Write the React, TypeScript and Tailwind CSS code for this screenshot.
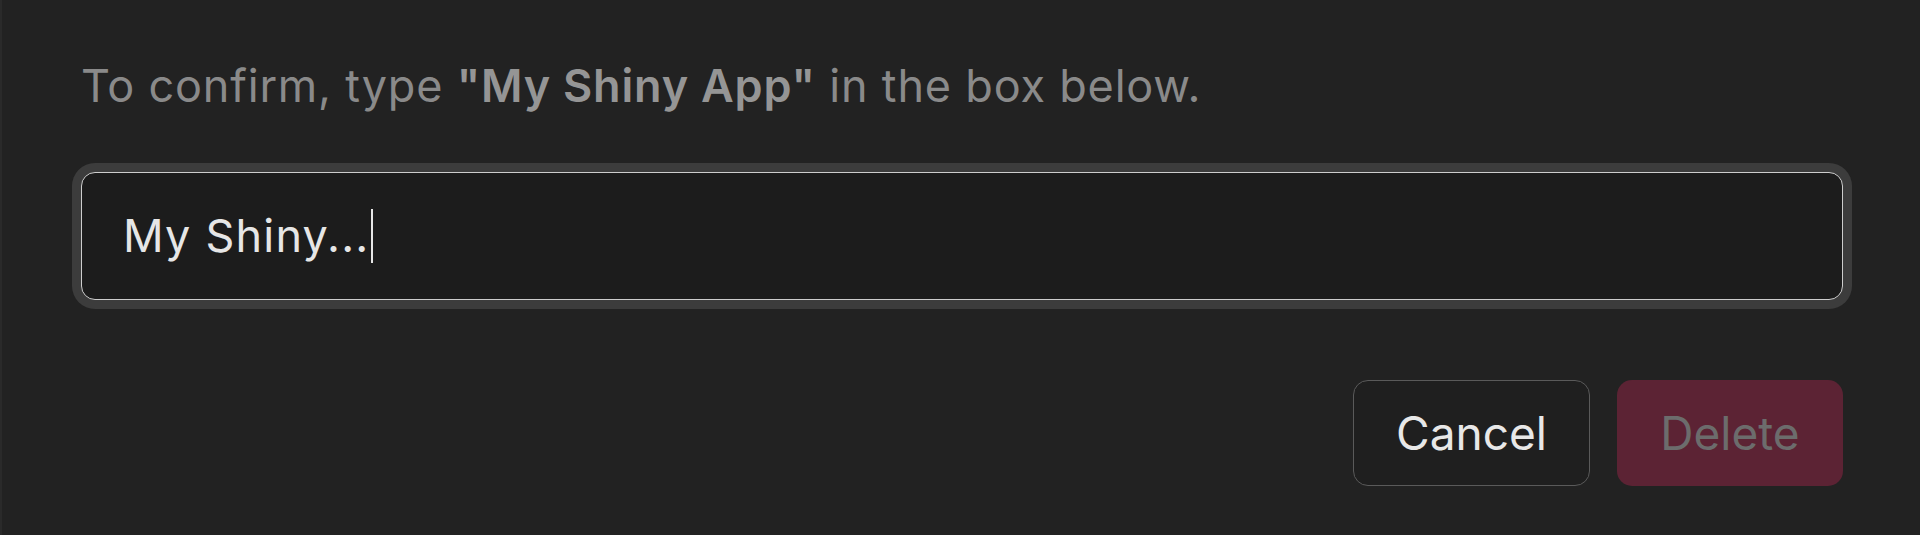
import React from "react";

export default function App() {
  return (
    <div
      className="w-full h-[535px] bg-[#222222] border-l-2 border-[#2a2a2a] pl-[79px] pr-[77px] pt-[59px] flex flex-col"
      style={{ fontFamily: "Inter, 'Noto Sans', sans-serif" }}
    >
      <p className="text-[45px] leading-[54px] tracking-[0.8px] text-[#8a8a8a] whitespace-nowrap">
        To confirm, type <span className="font-semibold text-[#959595]">"My Shiny App"</span> in the box below.
      </p>
      <div className="mt-[59px] h-[128px] rounded-[14px] border-[1.5px] border-[#cdcdcd] bg-[#1c1c1c] shadow-[0_0_0_9px_#3c3c3c] flex items-center pl-[41px]">
        <span className="text-[45px] leading-[54px] tracking-[1.2px] text-[#e6e6e6] whitespace-nowrap">My Shiny...</span>
        <span className="ml-[1px] w-[2px] h-[54px] bg-[#e6e6e6]" />
      </div>
      <div className="mt-[80px] flex justify-end gap-[27px]">
        <button className="w-[237px] h-[106px] rounded-[15px] border-[1.5px] border-[#5a5a5a] bg-[#1f1f1f] text-[46px] text-[#e8e8e8] flex items-center justify-center">
          Cancel
        </button>
        <button className="w-[226px] h-[106px] rounded-[15px] bg-[#5c2334] text-[46px] text-[#6c6c6c] flex items-center justify-center">
          Delete
        </button>
      </div>
    </div>
  );
}
